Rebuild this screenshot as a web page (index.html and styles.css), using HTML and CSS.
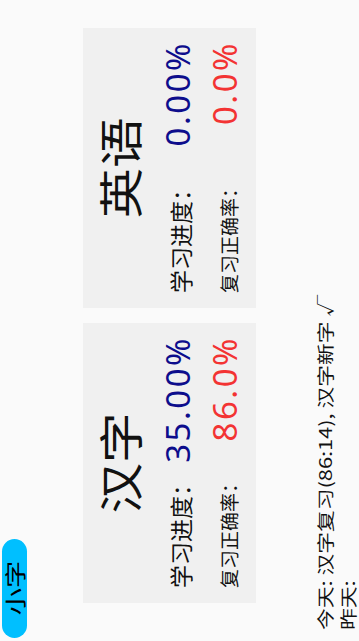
FILE: index.html
```html
<!DOCTYPE html>
<html lang="zh">
<head>
  <meta charset="UTF-8">
  <meta name="viewport" content="width=device-width, initial-scale=1">
  <title>学习进度</title>
  <link rel="stylesheet" href="styles.css">
</head>
<body>

  <!-- whole app is drawn in landscape and turned on its side -->
  <div class="screen">

    <div class="topbar">
      <button class="size-btn"><span>小字</span></button>
    </div>

    <div class="cards">
      <div class="card">
        <div class="title"><span>汉字</span></div>
        <div class="row">
          <span class="label big">学习进度：</span>
          <span class="value blue">35.00%</span>
        </div>
        <div class="row">
          <span class="label small">复习正确率：</span>
          <span class="value red">86.0%</span>
        </div>
      </div>
      <div class="card">
        <div class="title"><span>英语</span></div>
        <div class="row">
          <span class="label big">学习进度：</span>
          <span class="value blue">0.00%</span>
        </div>
        <div class="row">
          <span class="label small">复习正确率：</span>
          <span class="value red">0.0%</span>
        </div>
      </div>
    </div>

    <div class="log">
      <p><span>今天: 汉字复习(86:14), 汉字新字 √</span></p>
      <p><span>昨天:</span></p>
    </div>

  </div>

</body>
</html>
```

FILE: styles.css
```css
/* RESET + BASE */
* { margin: 0; padding: 0; box-sizing: border-box; }
html, body { width: 359px; height: 641px; overflow: hidden; }
body {
  background: #fafafa;
  color: #111;
  font-family: "Noto Sans CJK SC", "Noto Sans", sans-serif;
}

/* ROTATED SCREEN */
.screen {
  width: 641px;
  height: 359px;
  transform-origin: 0 0;
  transform: translateY(641px) rotate(-90deg);
  display: flex;
  flex-direction: column;
}

/* TOP BAR */
.topbar {
  height: 27px;
  padding: 2px 0 0 3px;
  display: flex;
}
.size-btn {
  width: 99px;
  height: 25px;
  border: none;
  border-radius: 13px;
  background: #00bfff;
  color: #000;
  font-family: inherit;
  font-size: 20px;
  display: flex;
  justify-content: center;
  align-items: center;
}
.size-btn span {
  display: inline-block;
  line-height: 22px;
  transform: scale(1.36, 1.05);
}

/* CARDS */
.cards {
  margin-top: 56px;
  padding-left: 38px;
  display: flex;
  gap: 15px;
}
.card {
  width: 280px;
  height: 173px;
  background: #f0f0f0;
  padding: 13px 15px 0;
}
.title {
  height: 46px;
  font-size: 44px;
  line-height: 46px;
  text-align: center;
  margin-bottom: 12px;
}
.title span {
  display: inline-block;
  transform: scaleX(1.15);
}
.row {
  height: 47px;
  display: flex;
  justify-content: space-between;
  align-items: baseline;
}
.label { color: #111; }
.label.big { font-size: 23px; }
.label.small { font-size: 19px; }
.value {
  font-family: "Noto Sans", sans-serif;
  font-size: 33px;
  line-height: 47px;
  letter-spacing: 2.5px;
  margin-right: -2px;
}
.blue { color: #0d0d8c; }
.red { color: #f33333; }

/* LOG */
.log {
  margin-top: 57px;
  padding-left: 11px;
  font-size: 17px;
  line-height: 23px;
}
.log span {
  display: inline-block;
  transform-origin: 0 50%;
  transform: scaleX(1.28);
  white-space: nowrap;
}
```
